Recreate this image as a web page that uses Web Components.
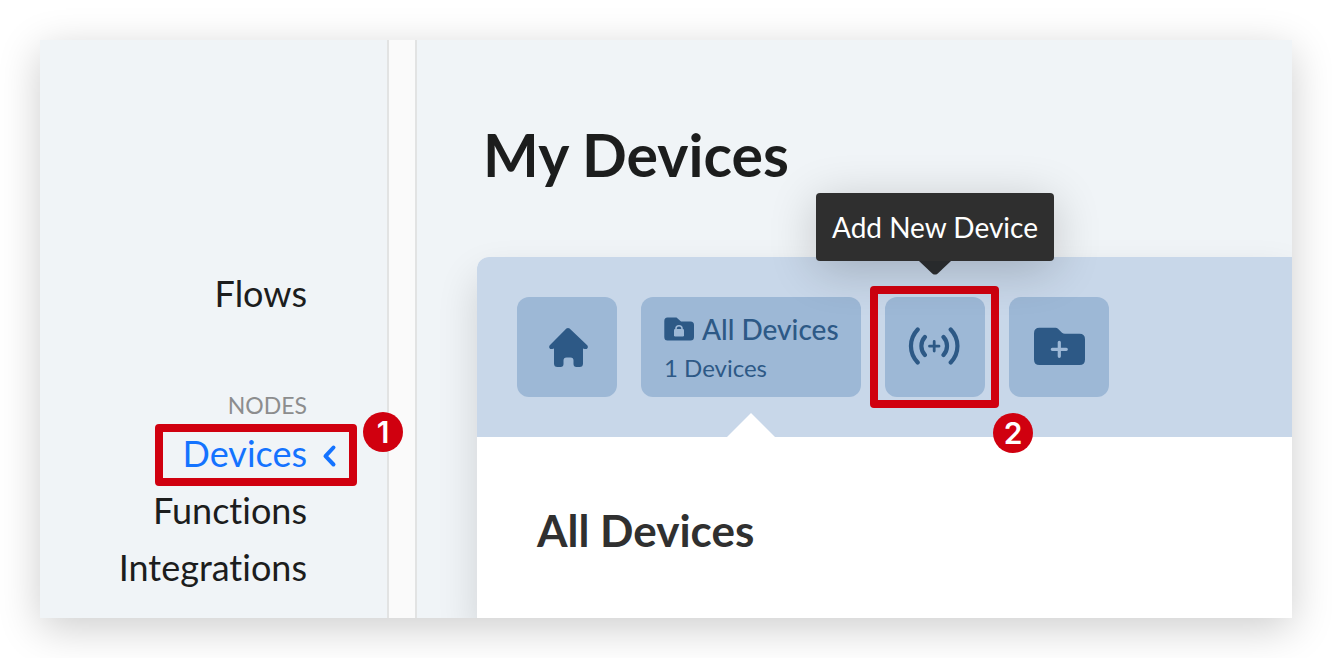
<!DOCTYPE html>
<html lang="en">
<head>
<meta charset="utf-8">
<meta name="viewport" content="width=device-width, initial-scale=1">
<title>My Devices</title>
<style>
body { margin: 0; background: #fff; font-family: Lato, "Open Sans", sans-serif; font-variant-ligatures: none; color: #1c1d1d; }
</style>
</head>
<body>
<app-frame>
  <side-nav slot="nav">
    <nav-item href="#flows">Flows</nav-item>
    <nav-group label="NODES">
      <nav-item href="#devices" current step="1">Devices</nav-item>
      <nav-item href="#functions">Functions</nav-item>
      <nav-item href="#integrations">Integrations</nav-item>
    </nav-group>
  </side-nav>
  <device-page heading="My Devices">
    <tool-tile slot="tools" label="Home" icon="home"></tool-tile>
    <folder-tile slot="tools" count="1 Devices">All Devices</folder-tile>
    <tool-tile slot="tools" label="Add New Device" icon="wave" tip step="2"></tool-tile>
    <tool-tile slot="tools" label="Add New Folder" icon="folder"></tool-tile>
    <span>All Devices</span>
  </device-page>
</app-frame>
<script>
const ICONS = {
  home: `<svg width="42" height="40" viewBox="0 0 42 40" aria-hidden="true"><path fill="currentColor" d="M20.400 1.600q1.600-1.400 3.200 0L41.200 18.300q1.200 1.500.2 2.900-.8 1.200-2.800.7L37 21.500V36.500q0 3.500-3.500 3.500H30.500q-3 0-3-3V33.500q0-3-3-3H20.500q-3 0-3 3V37q0 3-3 3H11.500q-3.500 0-3.500-3.500V21.500l-1.600.4q-2 .5-2.800-.7-.9-1.400.2-2.900z"/></svg>`,
  wave: `<svg width="56" height="40" viewBox="0 0 56 40" aria-hidden="true"><g fill="none" stroke="currentColor" stroke-linecap="round"><path stroke-width="4.200" d="M10.700 2.500C1.700 12 1.700 26 10.700 35.500M43.700 2.500C52.700 12 52.700 26 43.700 35.500M17.900 10C13.200 15 13.200 23 17.900 28M36.500 10C41.200 15 41.200 23 36.500 28"/><path stroke-width="2.800" d="M22.500 19.200H32M27.200 14.500V24"/></g></svg>`,
  folder: `<svg width="52" height="40" viewBox="0 0 52 40" aria-hidden="true"><path fill="currentColor" d="M6.500.7H22.500Q24 .7 25 1.700L29 5.700Q30.200 6.800 32 6.800H46.500Q52 6.800 52 12.300V32.500Q52 38 46.500 38H6.500Q1 38 1 32.500V6.200Q1 .7 6.500.7z"/><path d="M19.300 22.300H33.300M26.300 15.300V29.300" stroke="#9db8d6" stroke-width="3.200" stroke-linecap="round"/></svg>`,
  lock: `<svg width="30" height="24" viewBox="0 0 30 24" aria-hidden="true"><path fill="currentColor" d="M3.500.5H12.500L17 4.500H26.500Q30 4.500 30 8V20Q30 23.500 26.500 23.500H3.500Q.3 23.500.3 20V4Q.3.500 3.500.5z"/><rect x="10" y="12" width="10" height="7.500" rx="1.200" fill="#9db8d6"/><path d="M12 12.500V11.500Q12 8.700 15 8.700T18 11.500V12.500" fill="none" stroke="#9db8d6" stroke-width="1.600"/></svg>`
};

function define(name, render) {
  customElements.define(name, class extends HTMLElement {
    connectedCallback() {
      if (this.shadowRoot) return;
      this.attachShadow({ mode: "open" }).innerHTML = render(this);
    }
  });
}

define("app-frame", () => `
<style>
:host { display: flex; box-sizing: border-box; min-height: 100vh; padding: 40px; }
.window { flex: 1; min-width: 0; display: flex; overflow: hidden; background: #f0f4f7; box-shadow: 0 10px 40px rgba(0,0,0,.2); }
.gutter { flex: none; width: 26px; background: #fafafa; border: solid #e2e3e3; border-width: 0 2px; }
main { flex: 1; min-width: 0; display: flex; }
</style>
<div class="window"><slot name="nav"></slot><div class="gutter"></div><main><slot></slot></main></div>`);

define("side-nav", () => `
<style>
:host { display: block; flex: none; box-sizing: border-box; width: 347px; padding: 225px 80px 0 0; }
nav { display: flex; flex-direction: column; gap: 63px; }
</style>
<nav><slot></slot></nav>`);

define("nav-group", el => `
<style>
:host { display: block; }
h2 { margin: 0; font-size: 23px; line-height: 40px; font-weight: 400; text-align: right; color: #8c8d8e; }
</style>
<h2>${el.getAttribute("label")}</h2><slot></slot>`);

define("nav-item", el => `
<style>
:host { display: flex; justify-content: flex-end; }
a { position: relative; font-size: 36px; line-height: 57px; color: inherit; text-decoration: none; }
:host([current]) a { color: #1473ff; }
.arrow { position: absolute; right: -30px; top: 19px; }
step-mark { position: absolute; right: -50px; top: -1px; width: 202px; height: 62px; --badge-x: 206px; --badge-y: -14px; }
</style>
<a href="${el.getAttribute("href")}"><slot></slot>${el.hasAttribute("current") ? `
<svg class="arrow" width="16" height="24" viewBox="0 0 16 24" aria-hidden="true"><path d="M12.500 3.500L4.500 12.200L12.500 20.500" fill="none" stroke="currentColor" stroke-width="4" stroke-linecap="round" stroke-linejoin="round"/></svg>
<step-mark>${el.getAttribute("step")}</step-mark>` : ""}</a>`);

define("step-mark", () => `
<style>
:host { display: block; box-sizing: border-box; border: 8px solid #d0000f; border-radius: 4px; pointer-events: none; }
.badge { position: absolute; left: calc(var(--badge-x) - 6px); top: calc(var(--badge-y) - 6px); width: 40px; height: 40px; border-radius: 50%; background: #d0000f; color: #fff; font-family: Inter, sans-serif; font-size: 30px; line-height: 40px; font-weight: 600; text-align: center; }
</style>
<span class="badge"><slot></slot></span>`);

define("device-page", el => `
<style>
:host { flex: 1; min-width: 0; display: flex; flex-direction: column; padding-left: 60px; }
h1 { margin: 0; padding: 79px 6px 66px; font-size: 59px; line-height: 72px; font-weight: 700; }
section { flex: 1; background: #fff; border-radius: 12px 0 0 0; box-shadow: 0 20px 40px rgba(0,0,0,.14); }
.tools { display: flex; gap: 24px; padding: 40px; background: #c8d7e9; border-radius: 12px 0 0 0; }
h2 { margin: 0; padding: 67px 60px 40px; font-size: 44px; line-height: 52px; font-weight: 700; color: #303030; }
</style>
<h1>${el.getAttribute("heading")}</h1>
<section><div class="tools"><slot name="tools"></slot></div><h2><slot></slot></h2></section>`);

const TILE = `
:host { display: block; position: relative; flex: none; }
button { display: flex; box-sizing: border-box; height: 100px; margin: 0; border: 0; border-radius: 12px; background: #9db8d6; color: #2d5986; font: inherit; cursor: pointer; }
svg { display: block; flex: none; }`;

define("tool-tile", el => `
<style>${TILE}
button { width: 100px; padding: 0; align-items: center; justify-content: center; }
.tip { position: absolute; z-index: 1; left: 50%; bottom: 136px; transform: translateX(-50%); padding: 0 16px; border-radius: 4px; background: #2f2f2f; color: #fff; font-size: 28px; line-height: 68px; white-space: nowrap; box-shadow: 0 8px 48px rgba(0,0,0,.2); }
.tip svg { position: absolute; top: 100%; left: calc(50% - 16px); }
step-mark { position: absolute; left: -15px; top: -11px; width: 129px; height: 122px; --badge-x: 121px; --badge-y: 125px; }
</style>
<button type="button" aria-label="${el.getAttribute("label")}">${ICONS[el.getAttribute("icon")]}</button>
${el.hasAttribute("tip") ? `<div class="tip" role="tooltip">${el.getAttribute("label")}<svg width="32" height="14" viewBox="0 0 32 14" aria-hidden="true"><path fill="#282a2c" d="M0 0H32L18.500 12.700Q16 14.500 13.500 12.700z"/></svg></div>` : ""}
${el.hasAttribute("step") ? `<step-mark>${el.getAttribute("step")}</step-mark>` : ""}`);

define("folder-tile", el => `
<style>${TILE}
button { width: 220px; padding: 12px 0 8px 23px; flex-direction: column; text-align: left; }
.name { display: flex; align-items: center; gap: 8px; font-size: 28px; line-height: 40px; font-weight: 500; white-space: nowrap; }
.count { font-size: 24px; line-height: 38px; }
.pointer { position: absolute; left: calc(50% - 24px); top: 116px; width: 48px; height: 24px; background: #fff; clip-path: polygon(50% 0, 100% 100%, 0 100%); }
</style>
<button type="button"><span class="name">${ICONS.lock}<slot></slot></span><span class="count">${el.getAttribute("count")}</span></button>
<span class="pointer"></span>`);
</script>
</body>
</html>
